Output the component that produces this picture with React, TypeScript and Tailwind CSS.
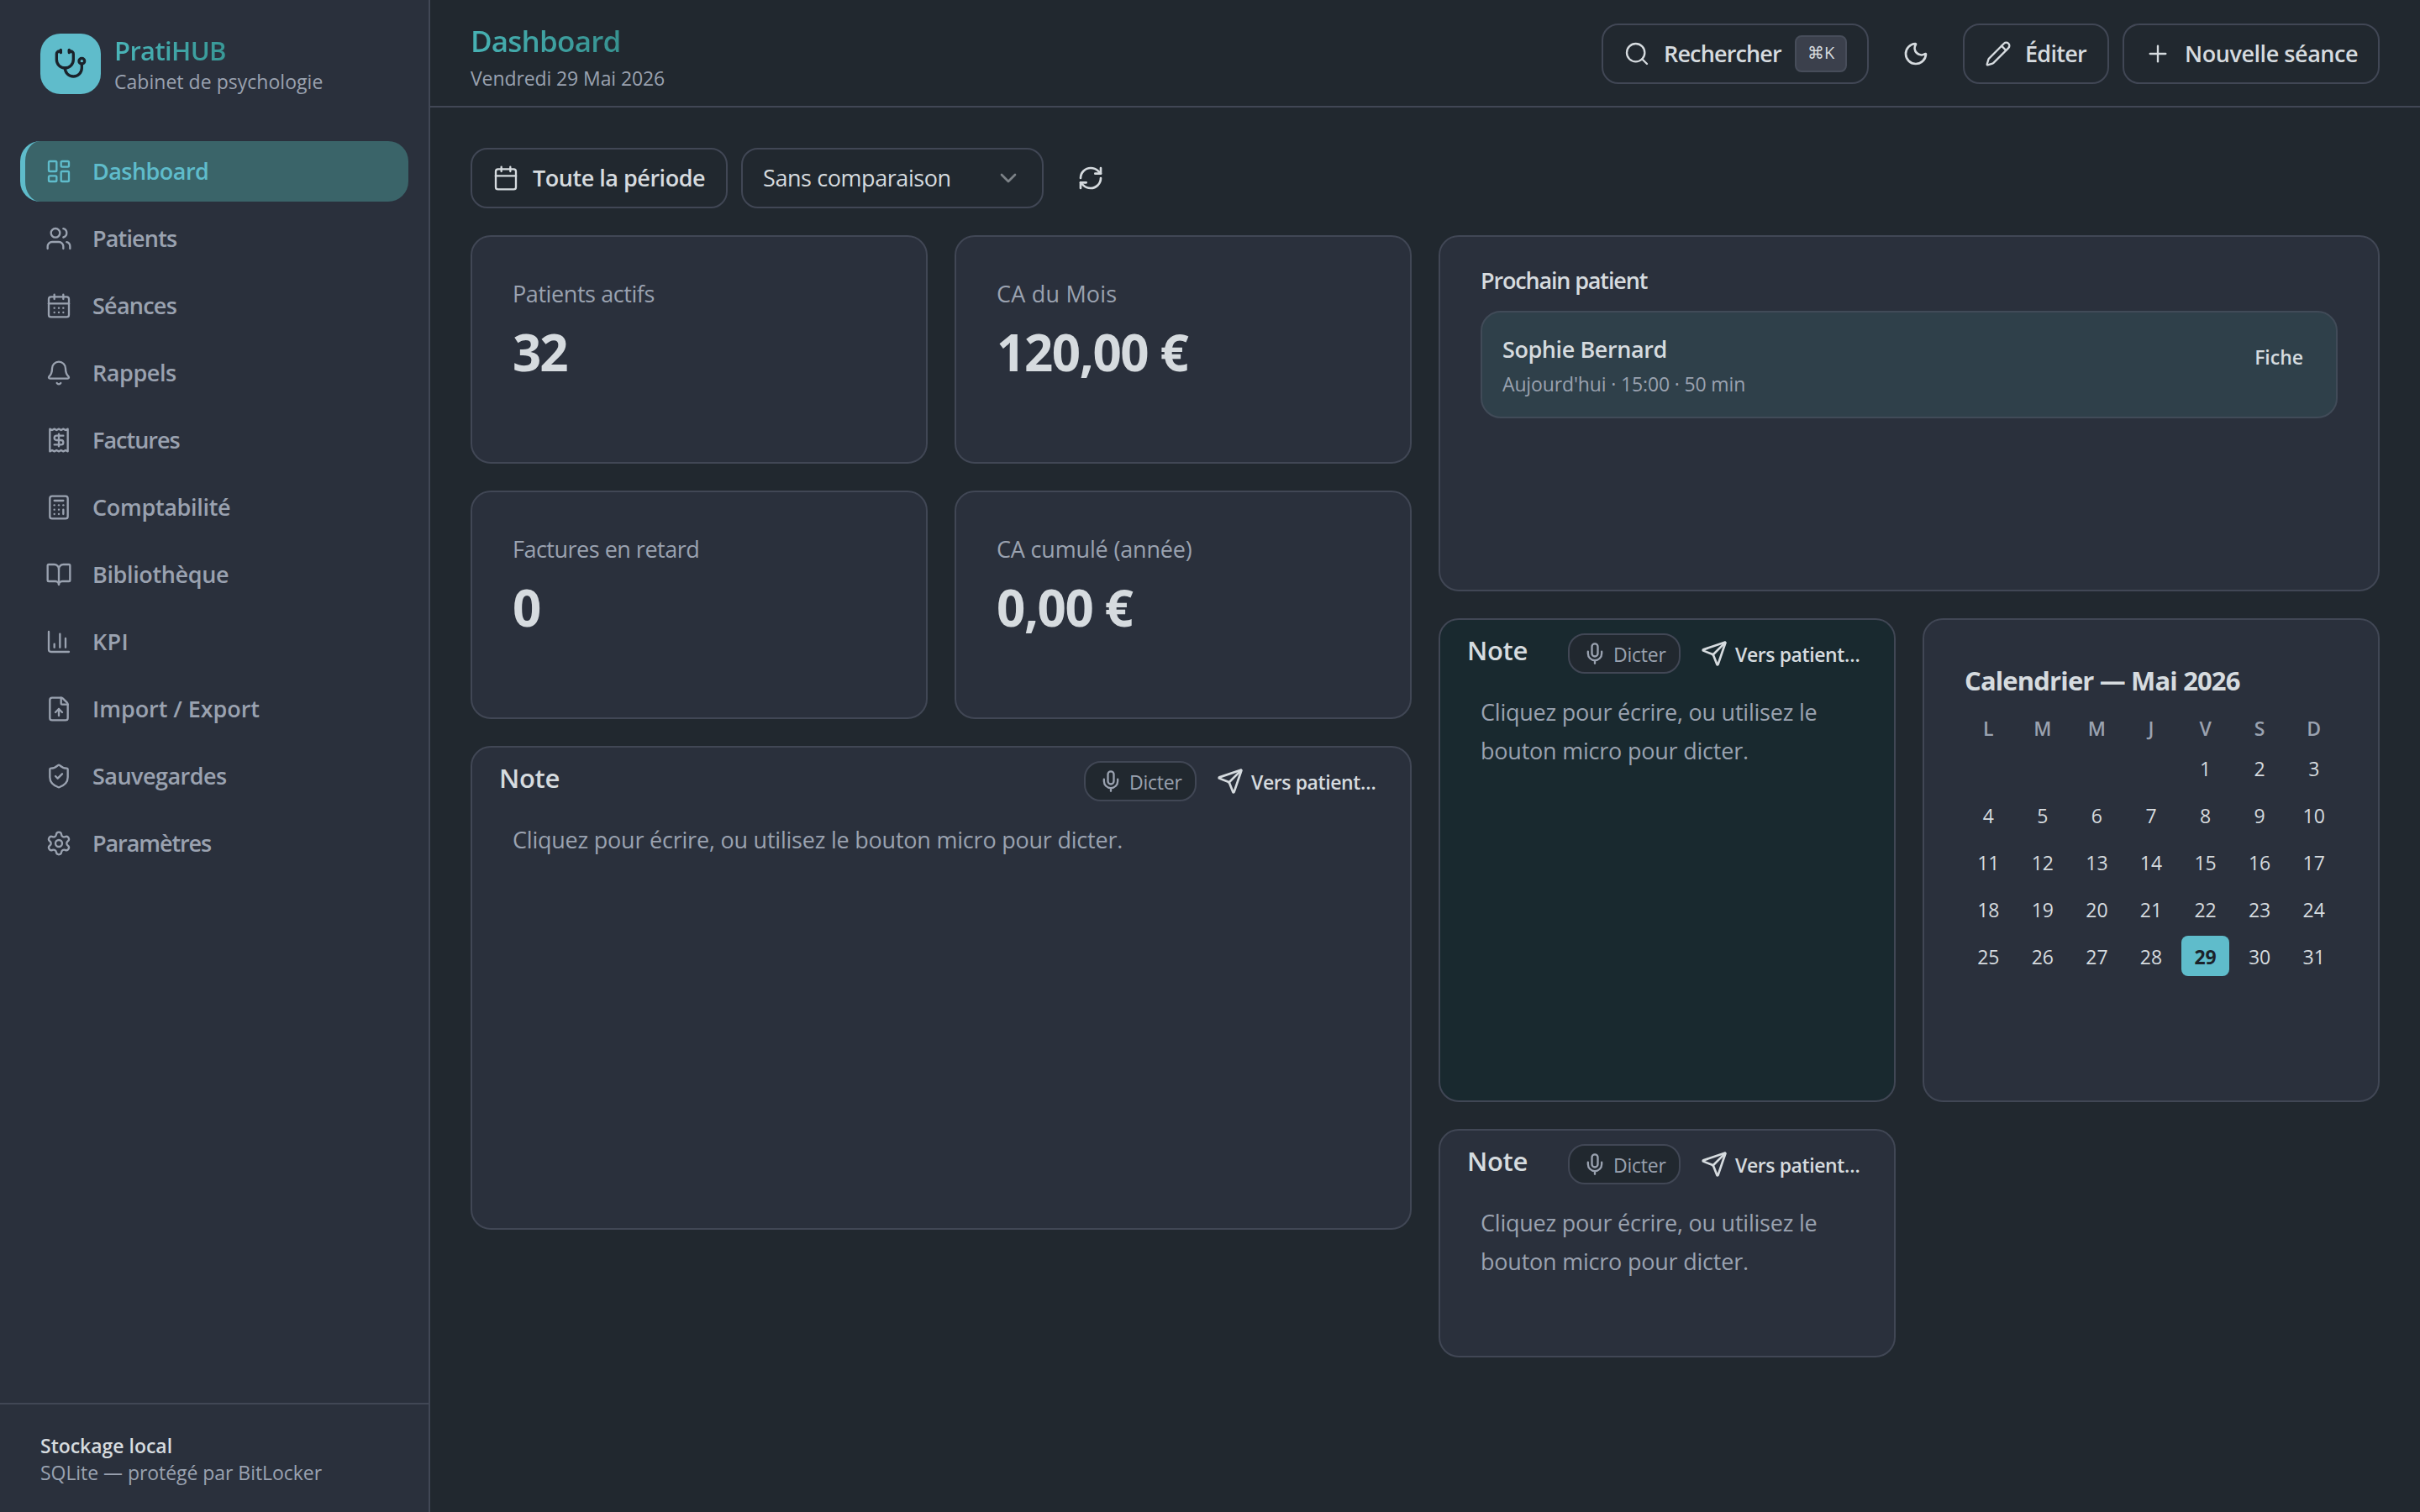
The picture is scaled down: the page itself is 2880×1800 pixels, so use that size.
import {
  Bell, BookOpen, Calculator, Calendar, CalendarDays, ChevronDown, FileUp, LayoutDashboard,
  Mic, Moon, Pencil, Plus, RefreshCw, Search, Send, Settings, ShieldCheck, Stethoscope, Users,
} from "lucide-react";
import type { ReactNode } from "react";

type IconProps = { className?: string; strokeWidth?: number };

function ReceiptDollarIcon({ className, strokeWidth }: IconProps) {
  return (
    <svg viewBox="0 0 24 24" fill="none" stroke="currentColor" strokeWidth={strokeWidth} strokeLinecap="round" strokeLinejoin="round" className={className}>
      <path d="M4 2v20l2-1 2 1 2-1 2 1 2-1 2 1 2-1 2 1V2l-2 1-2-1-2 1-2-1-2 1-2-1-2 1Z" />
      <path d="M16 8h-6a2 2 0 1 0 0 4h4a2 2 0 1 1 0 4H8" />
      <path d="M12 17.5v-11" />
    </svg>
  );
}

function ChartIcon({ className, strokeWidth }: IconProps) {
  return (
    <svg viewBox="0 0 24 24" fill="none" stroke="currentColor" strokeWidth={strokeWidth} strokeLinecap="round" strokeLinejoin="round" className={className}>
      <path d="M3 3v16a2 2 0 0 0 2 2h16" />
      <path d="M18 17V9" />
      <path d="M13 17V5" />
      <path d="M8 17v-3" />
    </svg>
  );
}

const nav = [
  { label: "Dashboard", icon: LayoutDashboard, track: "tracking-[-0.54px]", active: true },
  { label: "Patients", icon: Users, track: "tracking-[-0.84px]" },
  { label: "Séances", icon: CalendarDays, track: "tracking-[-0.75px]" },
  { label: "Rappels", icon: Bell, track: "tracking-[-0.43px]" },
  { label: "Factures", icon: ReceiptDollarIcon, track: "tracking-[-1px]" },
  { label: "Comptabilité", icon: Calculator, track: "tracking-[-0.32px]" },
  { label: "Bibliothèque", icon: BookOpen, track: "tracking-[-0.37px]" },
  { label: "KPI", icon: ChartIcon, track: "tracking-[0.3px]" },
  { label: "Import / Export", icon: FileUp, track: "tracking-[-0.05px]" },
  { label: "Sauvegardes", icon: ShieldCheck, track: "tracking-[-0.53px]" },
  { label: "Paramètres", icon: Settings, track: "tracking-[-1.08px]" },
];

function Sidebar() {
  return (
    <aside className="flex w-[512px] shrink-0 flex-col border-r-2 border-[#414755] bg-[#2a303c]">
      <div className="flex gap-4 px-12 pt-10">
        <div className="flex size-[72px] items-center justify-center rounded-3xl bg-[#5fbccb]">
          <Stethoscope className="size-10 text-[#1b222a]" strokeWidth={2} />
        </div>
        <div>
          <div className="w-fit bg-gradient-to-r from-[#4ab5b9] to-[#389796] bg-clip-text text-[31px] leading-10 font-semibold tracking-[-0.66px] text-transparent">PratiHUB</div>
          <div className="mt-px text-[23px] leading-8 tracking-[0.03px] text-[#9aa2b0]">Cabinet de psychologie</div>
        </div>
      </div>
      <nav className="flex flex-col gap-2 px-6 pt-[55px]">
        {nav.map(({ label, icon: Icon, track, active }) => (
          <a
            key={label}
            className={`flex h-[72px] items-center gap-6 rounded-3xl border-l-[6px] px-6 text-[27px] font-semibold ${track} ${
              active ? "border-[#5fbccb] bg-[#3a6469] text-[#5fbccb]" : "border-transparent text-[#9aa2b0]"
            }`}
          >
            <Icon className="size-8" strokeWidth={1.75} />
            {label}
          </a>
        ))}
      </nav>
      <div className="mt-auto h-[130px] border-t-2 border-[#414755] px-12 pt-[33px] text-[23px]">
        <div className="leading-8 font-semibold tracking-[-0.02px] text-[#d6dbdf]">Stockage local</div>
        <div className="leading-[33px] tracking-[-0.05px] text-[#9aa2b0]">SQLite — protégé par BitLocker</div>
      </div>
    </aside>
  );
}

const outline = "flex h-[72px] items-center rounded-[20px] border-2 border-[#414755]";

function Header() {
  return (
    <header className="flex h-32 items-start justify-between border-b-2 border-[#414755] px-12">
      <div className="pt-6">
        <div className="w-fit bg-gradient-to-r from-[#47b2b4] to-[#379290] bg-clip-text text-[35px] leading-[49px] font-semibold tracking-[-0.79px] text-transparent">Dashboard</div>
        <div className="text-[23px] leading-10 tracking-[-0.1px] text-[#9aa2b0]">Vendredi 29 Mai 2026</div>
      </div>
      <div className="flex gap-4 pt-7 text-[27px] font-semibold text-[#d6dbdf]">
        <button className={`${outline} w-[318px] pl-6`}>
          <Search className="size-8" strokeWidth={1.75} />
          <span className="ml-4 w-[138px] tracking-[-0.85px]">Rechercher</span>
          <kbd className="ml-[18px] flex h-11 w-[62px] items-center justify-center rounded-lg border-2 border-[#474d5a] bg-[#3b404c] pb-[3px] font-['Open_Sans'] text-[20px] leading-7 font-normal">⌘K</kbd>
        </button>
        <button className="flex h-[72px] w-20 items-center justify-center">
          <Moon className="size-8" strokeWidth={2} />
        </button>
        <button className={`${outline} w-[174px] gap-4 pl-6 tracking-[-0.73px]`}>
          <Pencil className="size-8" strokeWidth={1.75} />
          Éditer
        </button>
        <button className={`${outline} w-[306px] gap-4 pl-6 tracking-[-0.45px]`}>
          <Plus className="size-8" strokeWidth={1.75} />
          Nouvelle séance
        </button>
      </div>
    </header>
  );
}

function Card({ className, children }: { className: string; children: ReactNode }) {
  return <section className={`rounded-3xl border-2 border-[#414755] ${className}`}>{children}</section>;
}

function Stat({ label, value, labelTrack, valueTrack }: { label: string; value: string; labelTrack: string; valueTrack: string }) {
  return (
    <Card className="row-span-2 bg-[#2a303c] p-12">
      <div className={`text-[27px] leading-10 text-[#9aa2b0] ${labelTrack}`}>{label}</div>
      <div className={`mt-[13px] text-[60px] leading-[72px] font-bold text-[#d6dbdf] ${valueTrack}`}>{value}</div>
    </Card>
  );
}

function Note({ className, textTrack }: { className: string; textTrack: string }) {
  return (
    <Card className={className}>
      <div className="flex items-start justify-between pr-6 pl-8">
        <h3 className="pt-3 text-[31px] leading-12 font-semibold tracking-[-0.35px] text-[#d6dbdf]">Note</h3>
        <div className="flex gap-2 pt-4 text-[23px]">
          <button className="flex h-12 w-[134px] items-center gap-2 rounded-[20px] border-2 border-[#414755] bg-[#21282f] pl-4 tracking-[-0.23px] text-[#9aa2b0]">
            <Mic className="size-7" strokeWidth={2} />
            <span className="pt-[3px]">Dicter</span>
          </button>
          <button className="flex h-12 w-[222px] items-center gap-2 pl-4 font-semibold tracking-[-0.4px] whitespace-nowrap text-[#d6dbdf]">
            <Send className="size-8 shrink-0" strokeWidth={2} />
            <span className="pt-0.5 pl-px">Vers patient…</span>
          </button>
        </div>
      </div>
      <p className={`px-12 pt-[23px] text-[27px] leading-[46px] text-[#9aa2b0] ${textTrack}`}>
        Cliquez pour écrire, ou utilisez le bouton micro pour dicter.
      </p>
    </Card>
  );
}

function NextPatient() {
  return (
    <Card className="col-span-2 col-start-3 row-span-3 row-start-1 bg-[#2a303c] px-12 pt-8">
      <h3 className="text-[27px] leading-10 font-semibold tracking-[-1.16px] text-[#d6dbdf]">Prochain patient</h3>
      <div className="mt-4 flex h-32 items-start justify-between rounded-3xl border-2 border-[#414b58] bg-[#2f404a] p-6">
        <div>
          <div className="text-[27px] leading-10 font-semibold tracking-[-0.42px] text-[#d6dbdf]">Sophie Bernard</div>
          <div className="mt-[5px] text-[23px] leading-8 tracking-[-0.14px] text-[#9aa2b0]">Aujourd'hui · 15:00 · 50 min</div>
        </div>
        <button className="h-[58px] px-[15px] text-[23px] font-semibold tracking-[-0.02px] text-[#d6dbdf]">Fiche</button>
      </div>
    </Card>
  );
}

const weekdays = ["L", "M", "M", "J", "V", "S", "D"];
const days = Array.from({ length: 31 }, (_, i) => i + 1);

function MonthCalendar() {
  return (
    <Card className="col-start-4 row-span-4 row-start-4 bg-[#2a303c] p-12">
      <h3 className="text-[31px] leading-12 font-bold tracking-[-0.86px] text-[#d6dbdf]">Calendrier — Mai 2026</h3>
      <div className="mt-4 grid grid-cols-7 gap-2 text-center text-[23px]">
        {weekdays.map((d, i) => (
          <div key={i} className="h-8 pt-px leading-8 font-semibold text-[#9aa2b0]">{d}</div>
        ))}
        {days.map((d) => (
          <div
            key={d}
            className={`h-12 rounded-lg pt-px leading-12 ${d === 1 ? "col-start-5" : ""} ${
              d === 29 ? "bg-[#5fbccb] font-bold text-[#1b222a]" : "text-[#d6dbdf]"
            }`}
          >
            {d}
          </div>
        ))}
      </div>
    </Card>
  );
}

export default function App() {
  return (
    <div className="flex h-[1800px] w-[2880px] overflow-hidden bg-[#21282f] font-['Open_Sans','Noto_Sans',sans-serif]">
      <Sidebar />
      <div className="flex flex-1 flex-col">
        <Header />
        <main className="flex-1 px-12 pt-12">
          <div className="flex gap-4 text-[27px] text-[#d6dbdf]">
            <button className={`${outline} w-[306px] gap-4 pl-6 font-semibold tracking-[-0.48px]`}>
              <Calendar className="size-8" strokeWidth={1.75} />
              Toute la période
            </button>
            <button className={`${outline} w-[360px] justify-between px-6 tracking-[-0.42px]`}>
              Sans comparaison
              <ChevronDown className="size-8 opacity-50" strokeWidth={2} />
            </button>
            <button className="flex h-[72px] w-20 items-center justify-center">
              <RefreshCw className="size-8" strokeWidth={2} />
            </button>
          </div>
          <div className="mt-8 grid auto-rows-[120px] grid-cols-4 gap-8">
            <Stat label="Patients actifs" value="32" labelTrack="tracking-[-0.42px]" valueTrack="tracking-[-2px]" />
            <Stat label="CA du Mois" value="120,00 €" labelTrack="tracking-[0.2px]" valueTrack="tracking-[-1.4px]" />
            <NextPatient />
            <Stat label="Factures en retard" value="0" labelTrack="tracking-[-0.5px]" valueTrack="tracking-[0px]" />
            <Stat label="CA cumulé (année)" value="0,00 €" labelTrack="tracking-[-0.17px]" valueTrack="tracking-[-1.4px]" />
            <Note className="col-span-2 col-start-1 row-span-4 row-start-5 bg-[#2a303c]" textTrack="tracking-[-0.22px]" />
            <Note className="col-start-3 row-span-4 row-start-4 bg-[#19292f]" textTrack="tracking-[-0.22px]" />
            <MonthCalendar />
            <Note className="col-start-3 row-span-2 row-start-8 bg-[#2a303c]" textTrack="tracking-[-0.22px]" />
          </div>
        </main>
      </div>
    </div>
  );
}
